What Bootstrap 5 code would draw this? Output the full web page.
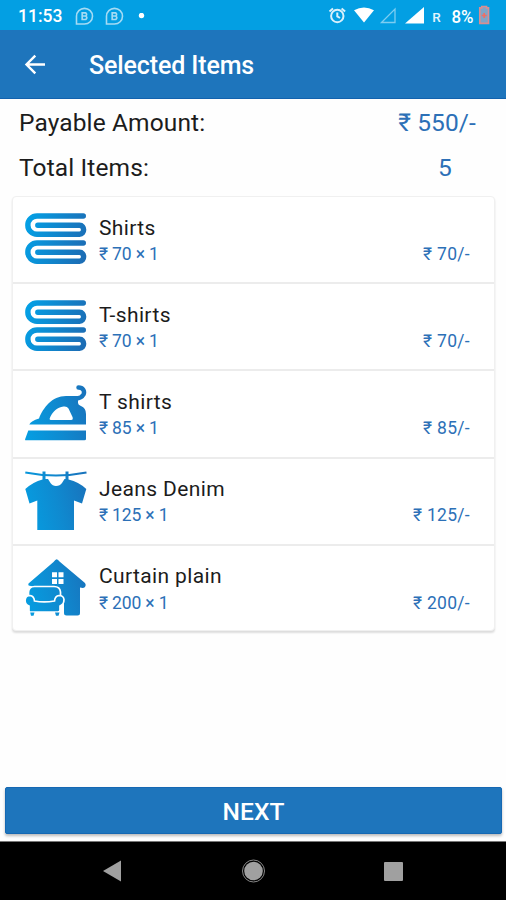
<!DOCTYPE html>
<html lang="en">
<head>
<meta charset="utf-8">
<meta name="viewport" content="width=device-width, initial-scale=1">
<title>Selected Items</title>
<link href="https://cdn.jsdelivr.net/npm/bootstrap@5.3.0/dist/css/bootstrap.min.css" rel="stylesheet">
<style>
body{font-family:Roboto,"Noto Sans",sans-serif;height:900px;overflow:hidden;background:#fefefe;color:#1c1c1c}
svg{display:block;flex:none}
.statusbar{height:30px;background:#039fe3;font-size:17.5px;font-weight:500;padding:2px 15px 0 18px;line-height:28px}
.note-icon{margin-left:11px}
.note-icon:first-of-type{margin-left:13px}
.appbar{height:69px;background:#1e75bc;border-bottom:1px solid #1262ae;padding:1px 24px 0}
.appbar h1{font-size:25px;font-weight:500;margin-left:43px;line-height:30px;letter-spacing:-.12px;padding-top:3px}
.totals{padding:1px 30px 0 19px;height:97px;font-size:24.5px;line-height:30px;letter-spacing:.12px}
.blue{color:#2c70b7}
.total-line{height:45.5px}
.items{margin:0 11px 0 12px;border:1px solid #f0f0f0;border-radius:4px;box-shadow:0 2px 2px #ddd;background:#fff}
.item{height:87.2px;border-bottom:2px solid #ececec;padding:11px 24px 0 12px}
.item:last-child{border-bottom:0;height:84.2px}
.item-name{font-size:21px;line-height:26px;letter-spacing:.38px;margin-top:6.500px}
.item-price{font-size:17.5px;line-height:26px;padding-top:.3px}
.rate{letter-spacing:-.15px}
.sum{letter-spacing:.3px}
.next{height:47px;margin:0 4px 7px 5px;background:#1e75bc;border:1px solid #1568b3;border-radius:2px;font-size:24.5px;font-weight:500;box-shadow:0 2px 3px #bbb;line-height:48px;padding:0;letter-spacing:.1px}
.sysnav{height:59px;background:#000;border-top:1px solid #777}
</style>
</head>
<body class="d-flex flex-column">
<svg width="0" height="0" class="position-absolute"><defs>
<linearGradient id="g" gradientUnits="userSpaceOnUse" x1="0" y1="20" x2="62" y2="36"><stop offset="0" stop-color="#04a0e5"/><stop offset="1" stop-color="#1c6db5"/></linearGradient>
<linearGradient id="h" gradientUnits="userSpaceOnUse" x1="0" y1="36" x2="62" y2="20"><stop offset="0" stop-color="#069ce0"/><stop offset=".5" stop-color="#0f8ad0"/><stop offset="1" stop-color="#1874bd"/></linearGradient>
<g id="towel" fill="none" stroke="url(#g)" stroke-width="5.4" stroke-linecap="round"><path d="M58.3 8H12A9.15 9.15 0 0 0 12 26.3H54.5C60 26.3 60 17.3 54.5 17.3H12.8"/><path d="M58.3 35H12A9.15 9.15 0 0 0 12 53.3H54.5C60 53.3 60 44.3 54.5 44.3H12.8"/></g>
<g id="chat" fill="none" stroke="#a5dbf4" stroke-width="1.6"><path d="M1.500 17V9.200A8 7.800 0 1 1 9.500 17Z"/><path d="M7.200 5.800H10.700Q12.500 7.500 10.700 9Q13 10.700 10.700 12.500H7.200ZM7.200 9H10.700" stroke-width="1.700"/></g>
</defs></svg>

<div class="statusbar d-flex align-items-center text-white">
  <span>11:53</span>
  <svg class="note-icon" width="19" height="19"><use href="#chat"/></svg>
  <svg class="note-icon" width="19" height="19"><use href="#chat"/></svg>
  <svg class="note-icon" width="12" height="6"><circle cx="6.500" cy="2.500" r="2.700" fill="#fff"/></svg>
  <svg class="ms-auto" width="163" height="24" viewBox="328 4 163 24">
    <g fill="none" stroke="#d9f0fb" stroke-width="2"><circle cx="337.300" cy="16" r="6.200"/><path d="M337.300 12.400V16.400L340 18M329.500 11.500L333 8.500M341.600 8.500L345.100 11.500"/></g>
    <path d="M354 10.300Q364 4.500 374 10.300L364 22.500Z" fill="#fff"/>
    <path d="M381.500 22.500L395 9V22.500Z" fill="none" stroke="#7dcdf1" stroke-width="1.300"/>
    <path d="M405 23.500L424 7V23.500Z" fill="#fff"/>
    <text x="432.300" y="21.700" font-size="13.500" fill="#e4f5fd">R</text>
    <text x="451.500" y="22.500" font-size="17.500" fill="#fff" textLength="22" lengthAdjust="spacingAndGlyphs">8%</text>
    <path d="M479.800 7.800H481.800V6.500H486.500V7.800H488.500V23.300H479.800Z" fill="#7ea5c8" stroke="#d98e91" stroke-width="1.700"/><path d="M481.700 15.500H486.700M484.200 13V18" stroke="#f26d62" stroke-width="1.700"/>
  </svg>
</div>
<header class="appbar d-flex align-items-center text-white">
  <svg width="22" height="22" viewBox="0 0 22 22" fill="none" stroke="#fff" stroke-width="2.400"><path d="M21 10.500H3M11.300 1.700L2.500 10.500L11.300 19.300"/></svg>
  <h1 class="mb-0">Selected Items</h1>
</header>
<section class="totals">
  <div class="total-line d-flex justify-content-between align-items-center"><span>Payable Amount:</span><span class="blue">₹ 550/-</span></div>
  <div class="total-line d-flex justify-content-between align-items-center"><span>Total Items:</span><span class="blue pe-4">5</span></div>
</section>
<main class="items">
  <div class="item d-flex"><svg width="62" height="62"><use href="#towel"/></svg><div class="ms-2 ps-1 flex-grow-1"><div class="item-name">Shirts</div><div class="item-price blue d-flex justify-content-between"><span class="rate">₹ 70 × 1</span><span class="sum">₹ 70/-</span></div></div></div>
  <div class="item d-flex"><svg width="62" height="62"><use href="#towel"/></svg><div class="ms-2 ps-1 flex-grow-1"><div class="item-name">T-shirts</div><div class="item-price blue d-flex justify-content-between"><span class="rate">₹ 70 × 1</span><span class="sum">₹ 70/-</span></div></div></div>
  <div class="item d-flex"><svg width="62" height="62" fill="url(#h)"><path d="M3.300 48.500H61V57Q61 58.300 59.500 58.300H.8Q-.2 58.300 .2 57ZM4.300 42.500Q6 39 14 36.500C18 26 27 14 41 14H53V21Q53 23 56 24Q61 26 61 32V42.500ZM26 38H46Q48.500 38 47.500 35L43.500 26.500Q42 24 38.500 24.500C32 25.500 28 29.500 25.500 34.500Q23.500 38 26 38Z" fill-rule="evenodd"/><path d="M53.500 5.500C58 5.500 60 9 58.500 12.500Q56.500 16 52 16.500" fill="none" stroke="url(#h)" stroke-width="4.500" stroke-linecap="round"/></svg><div class="ms-2 ps-1 flex-grow-1"><div class="item-name">T shirts</div><div class="item-price blue d-flex justify-content-between"><span class="rate">₹ 85 × 1</span><span class="sum">₹ 85/-</span></div></div></div>
  <div class="item d-flex"><svg width="62" height="62"><path d="M.3 2.500Q31 8.500 61.500 2.500" fill="none" stroke="url(#h)" stroke-width="2"/><path d="M17.500 1.500H20.500V9H23L25.500 13Q27.500 16 31 16Q35 16 37 13L39.500 9H40.500V1.500H43.500V9.500Q54 12 61.300 19L57 33.500L49 30.500V60H12.300V30.500L4.500 33.500L.3 19Q8 12 17.500 9.500Z" fill="url(#h)"/></svg><div class="ms-2 ps-1 flex-grow-1"><div class="item-name">Jeans Denim</div><div class="item-price blue d-flex justify-content-between"><span class="rate">₹ 125 × 1</span><span class="sum">₹ 125/-</span></div></div></div>
  <div class="item d-flex"><svg width="62" height="62" fill="url(#h)"><path d="M31.700 2.300Q33 2.500 34.500 4.500L60 26Q61.500 28 60 30Q58.500 31.500 55 30.500V56Q55 58.500 52.500 58.500H41.500Q39 58.500 39 56V45L20 32L6 29Q2.500 29 3.500 26.500L28.500 5Q30.500 2.500 31.700 2.300Z"/><path d="M27 15.300H32V20.300H27ZM33.500 15.300H38.500V20.300H33.500ZM27 22H32V27H27ZM33.500 22H38.500V27H33.500Z" fill="#fff"/><g stroke="#fff" stroke-width="1.700"><path d="M3.500 39V35Q4 29.500 9.500 29.500H29Q35 29.500 35.500 35V39L31 45H8Z"/><path d="M5 55Q4 55 4 53V49Q-.5 47.500 .2 42.500Q1 38.500 5 38.500Q9 39 9.500 44Q19 46 29.500 44Q30 39 34 38.500Q38.500 38.500 39 42.500Q39 47.500 35 49V53Q35 55 33 55Z"/></g><path d="M5.200 55.500H9.500L8.500 58.800H6ZM30 55.500H34.500L33.500 58.800H31Z"/></svg><div class="ms-2 ps-1 flex-grow-1"><div class="item-name">Curtain plain</div><div class="item-price blue d-flex justify-content-between"><span class="rate">₹ 200 × 1</span><span class="sum">₹ 200/-</span></div></div></div>
</main>
<button class="btn btn-primary next mt-auto">NEXT</button>
<nav class="sysnav"><svg width="506" height="58" viewBox="0 842 506 58" fill="#a0a0a0"><path d="M103 871L121 860.500V881.500Z"/><circle cx="253.500" cy="871" r="9.300"/><circle cx="253.500" cy="871" r="11" fill="none" stroke="#888" stroke-width="1"/><rect x="384" y="862" width="19" height="19" rx="1"/></svg></nav>
<script src="https://cdn.jsdelivr.net/npm/bootstrap@5.3.0/dist/js/bootstrap.bundle.min.js"></script>
</body>
</html>
